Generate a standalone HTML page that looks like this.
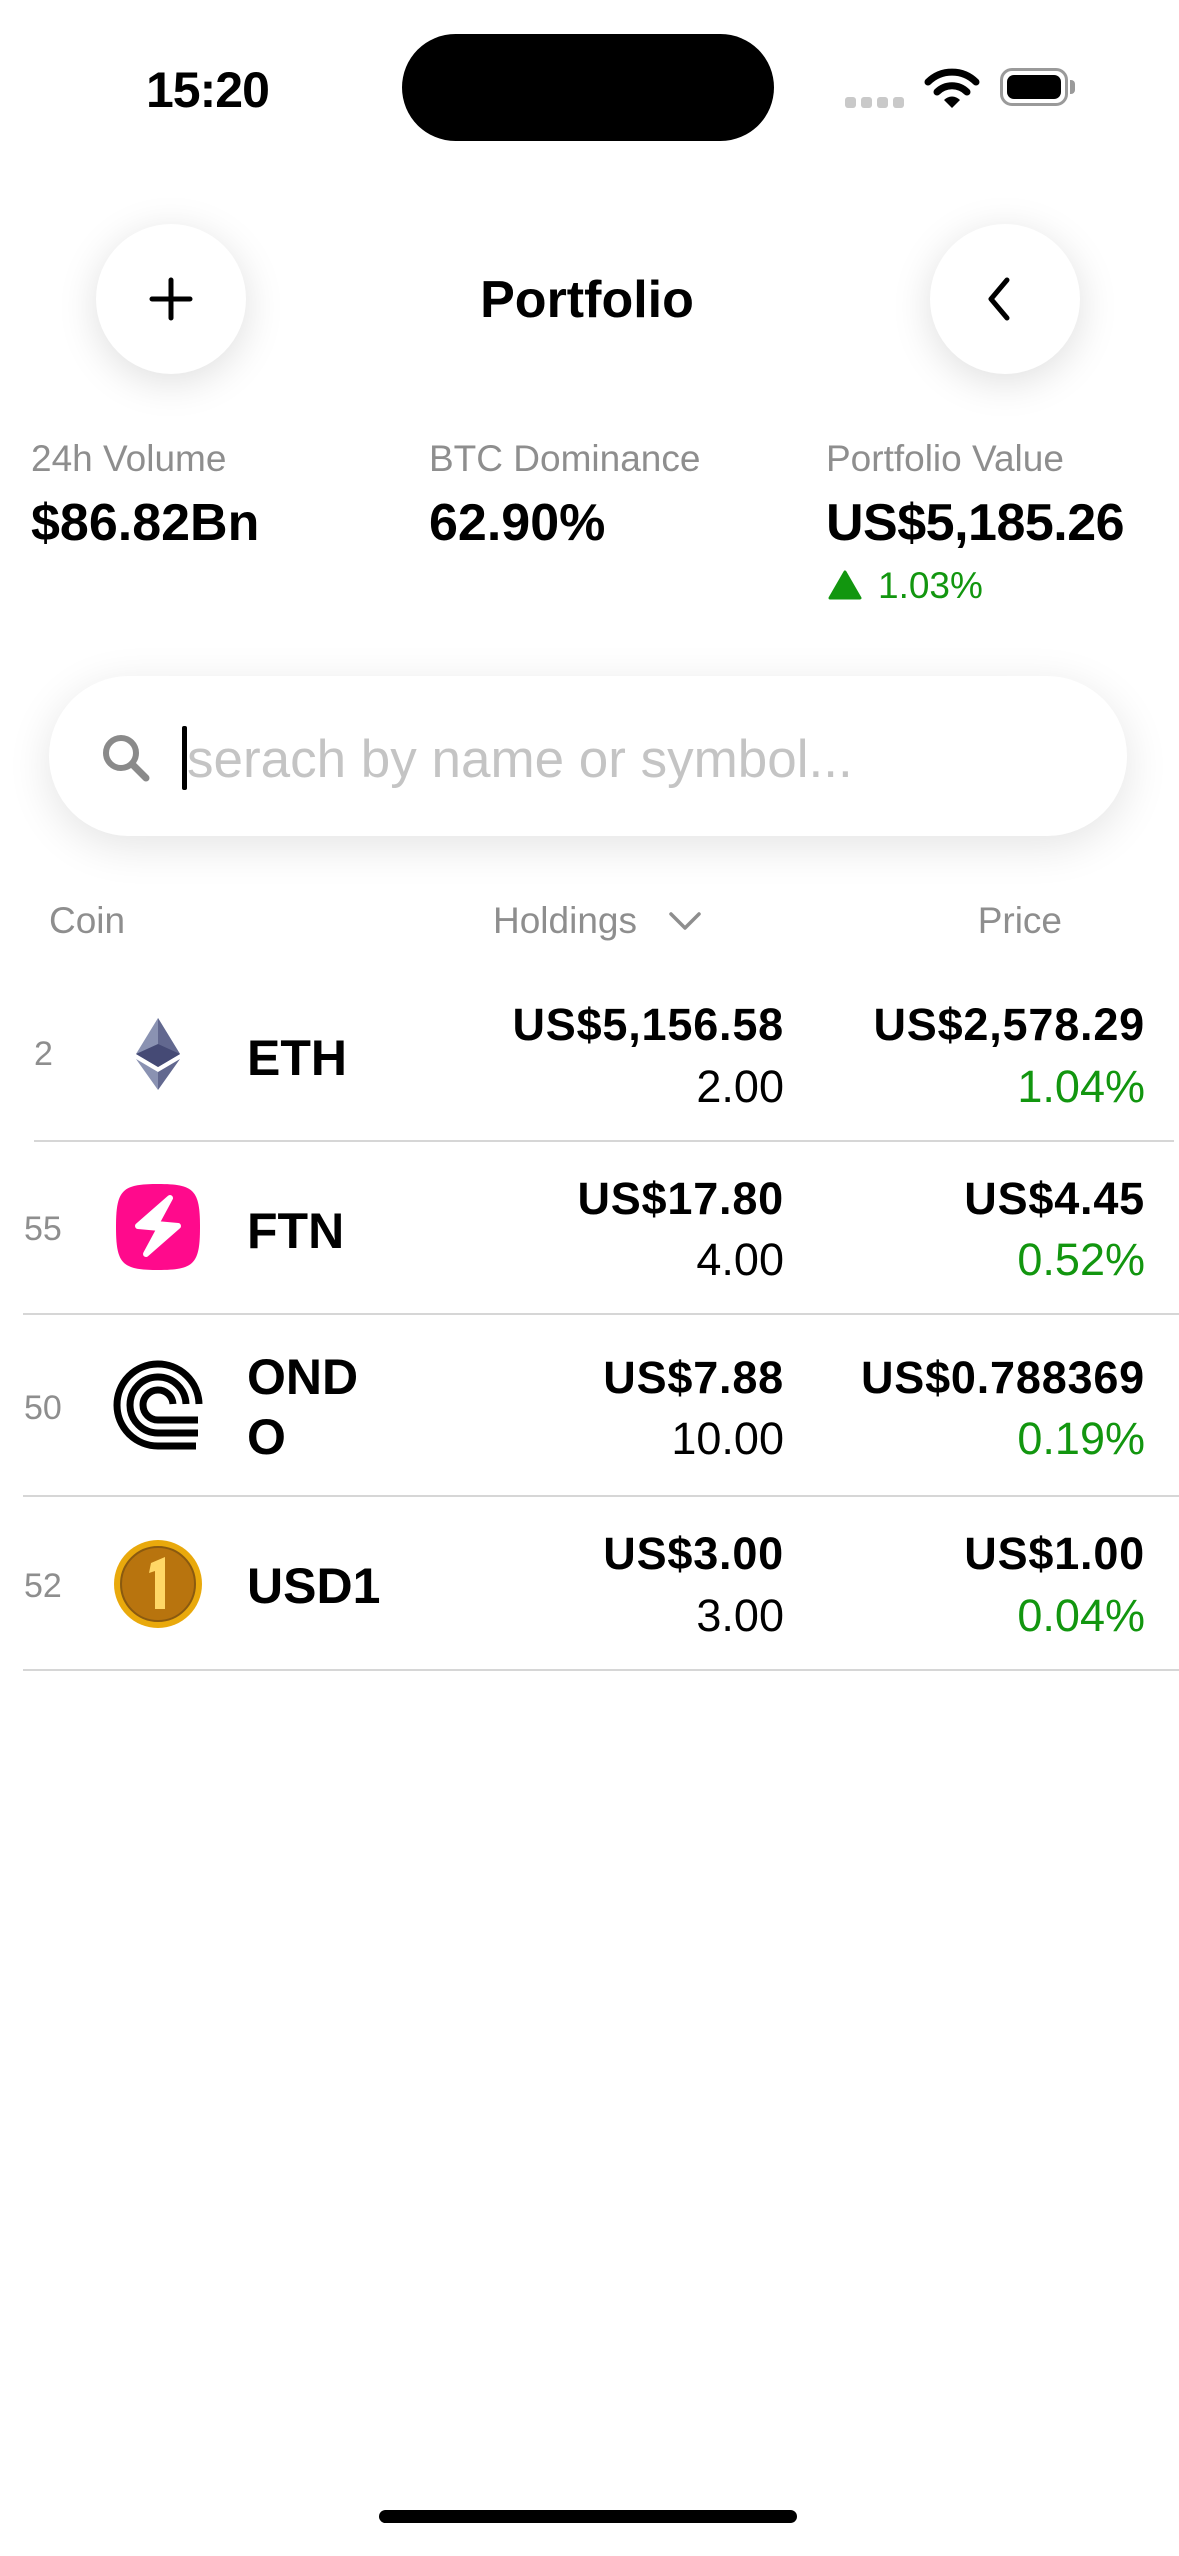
<!DOCTYPE html>
<html><head><meta charset="utf-8">
<style>
*{margin:0;padding:0;box-sizing:border-box}
body{width:1179px;height:2556px;background:#fff;position:relative;overflow:hidden;font-family:"Liberation Sans",sans-serif;color:#000}
.a{position:absolute;line-height:1;white-space:nowrap}
.r{text-align:right}
.b{font-weight:bold}
.g{color:#8e8e8e}
.gr{color:#12960f}
.div{position:absolute;height:2px;background:#d6d6d6}
</style></head><body>

<!-- status bar -->
<div class="a b" style="left:146px;top:65px;font-size:50px;letter-spacing:-1px">15:20</div>
<div style="position:absolute;left:402px;top:34px;width:372px;height:107px;border-radius:54px;background:#000"></div>
<div style="position:absolute;left:845px;top:97px;width:11px;height:11px;border-radius:3px;background:#c9c9c9"></div>
<div style="position:absolute;left:861px;top:97px;width:11px;height:11px;border-radius:3px;background:#c9c9c9"></div>
<div style="position:absolute;left:877px;top:97px;width:11px;height:11px;border-radius:3px;background:#c9c9c9"></div>
<div style="position:absolute;left:893px;top:97px;width:11px;height:11px;border-radius:3px;background:#c9c9c9"></div>
<svg style="position:absolute;left:924px;top:66px" width="56" height="44" viewBox="0 0 56 44">
<path d="M4 16 A34 34 0 0 1 52 16" fill="none" stroke="#000" stroke-width="7" stroke-linecap="round"/>
<path d="M13 26 A21 21 0 0 1 43 26" fill="none" stroke="#000" stroke-width="7" stroke-linecap="round"/>
<path d="M20 34 L28 42 L36 34 A11 11 0 0 0 20 34Z" fill="#000"/>
</svg>
<div style="position:absolute;left:1000px;top:68px;width:68px;height:38px;border:3px solid #9a9a9a;border-radius:12px;padding:4px"><div style="width:100%;height:100%;background:#000;border-radius:7px"></div></div>
<div style="position:absolute;left:1070px;top:80px;width:5px;height:14px;background:#9a9a9a;border-radius:0 4px 4px 0"></div>

<!-- nav -->
<div style="position:absolute;left:96px;top:224px;width:150px;height:150px;border-radius:50%;background:#fff;box-shadow:0 8px 40px rgba(0,0,0,0.13)"></div>
<svg style="position:absolute;left:148px;top:276px" width="46" height="46" viewBox="0 0 46 46"><path d="M23 4V42M4 23H42" stroke="#000" stroke-width="5" stroke-linecap="round"/></svg>
<div style="position:absolute;left:930px;top:224px;width:150px;height:150px;border-radius:50%;background:#fff;box-shadow:0 8px 40px rgba(0,0,0,0.13)"></div>
<svg style="position:absolute;left:985px;top:276px" width="30" height="46" viewBox="0 0 30 46"><path d="M22 4L6 23L22 42" fill="none" stroke="#000" stroke-width="5" stroke-linecap="round" stroke-linejoin="round"/></svg>
<div class="a b" style="left:387px;width:400px;text-align:center;top:274px;font-size:52px">Portfolio</div>

<!-- stats -->
<div class="a g" style="left:31px;top:440px;font-size:37px">24h Volume</div>
<div class="a g" style="left:429px;top:440px;font-size:37px">BTC Dominance</div>
<div class="a g" style="left:826px;top:440px;font-size:37px">Portfolio Value</div>
<div class="a b" style="left:31px;top:497px;font-size:52px">$86.82Bn</div>
<div class="a b" style="left:429px;top:497px;font-size:52px">62.90%</div>
<div class="a b" style="left:826px;top:497px;font-size:52px;letter-spacing:-0.5px">US$5,185.26</div>
<svg style="position:absolute;left:828px;top:570px" width="34" height="30" viewBox="0 0 34 30"><path d="M17 2 L32 28 L2 28Z" fill="#12960f" stroke="#12960f" stroke-width="3" stroke-linejoin="round"/></svg>
<div class="a gr" style="left:878px;top:567px;font-size:37px">1.03%</div>

<!-- search -->
<div style="position:absolute;left:49px;top:676px;width:1078px;height:160px;border-radius:80px;background:#fff;box-shadow:0 10px 44px rgba(0,0,0,0.11)"></div>
<svg style="position:absolute;left:100px;top:732px" width="54" height="54" viewBox="0 0 54 54"><circle cx="21" cy="21" r="15" fill="none" stroke="#8a8a8a" stroke-width="6"/><path d="M32 32L46 46" stroke="#8a8a8a" stroke-width="7" stroke-linecap="round"/></svg>
<div style="position:absolute;left:182px;top:726px;width:5px;height:64px;background:#000;border-radius:2px"></div>
<div class="a" style="left:187px;top:733px;font-size:53px;color:#c4c4c4">serach by name or symbol...</div>

<!-- header -->
<div class="a g" style="left:49px;top:902px;font-size:37px">Coin</div>
<div class="a g" style="left:493px;top:902px;font-size:37px">Holdings</div>
<svg style="position:absolute;left:668px;top:910px" width="34" height="22" viewBox="0 0 34 22"><path d="M3 4L17 18L31 4" fill="none" stroke="#8e8e8e" stroke-width="3.5" stroke-linecap="round" stroke-linejoin="round"/></svg>
<div class="a g r" style="right:117px;top:902px;font-size:37px">Price</div>

<!-- ETH -->
<div class="a g" style="left:34px;top:1037px;font-size:34px">2</div>
<svg style="position:absolute;left:134px;top:1018px" width="48" height="72" viewBox="0 0 48 72">
<path d="M24 0L2 36L24 49L46 36Z" fill="#8a92b2"/><path d="M24 0L46 36L24 49Z" fill="#62688f"/><path d="M24 26L2 36L24 49L46 36Z" fill="#454a75"/>
<path d="M2 41L24 72L24 54Z" fill="#8a92b2"/><path d="M46 41L24 72L24 54Z" fill="#62688f"/></svg>
<div class="a b" style="left:247px;top:1033px;font-size:50px">ETH</div>
<div class="a b r" style="right:395px;top:1002px;font-size:45px;letter-spacing:0.8px">US$5,156.58</div>
<div class="a r" style="right:395px;top:1064px;font-size:45px">2.00</div>
<div class="a b r" style="right:34px;top:1002px;font-size:45px;letter-spacing:0.8px">US$2,578.29</div>
<div class="a r gr" style="right:34px;top:1064px;font-size:45px">1.04%</div>
<div class="div" style="left:34px;right:5px;top:1140px"></div>

<!-- FTN -->
<div class="a g" style="left:24px;top:1212px;font-size:34px">55</div>
<svg style="position:absolute;left:114px;top:1182px" width="88" height="90" viewBox="0 0 88 90">
<path d="M44 2C80 2 86 8 86 45C86 82 80 88 44 88C8 88 2 82 2 45C2 8 8 2 44 2Z" fill="#ff0a8c"/>
<path d="M56 16L24 44L46 46L32 72L64 44L42 42Z" fill="#fff" stroke="#fff" stroke-width="6" stroke-linejoin="round"/></svg>
<div class="a b" style="left:247px;top:1206px;font-size:50px">FTN</div>
<div class="a b r" style="right:395px;top:1176px;font-size:45px;letter-spacing:0.8px">US$17.80</div>
<div class="a r" style="right:395px;top:1237px;font-size:45px">4.00</div>
<div class="a b r" style="right:34px;top:1176px;font-size:45px;letter-spacing:0.8px">US$4.45</div>
<div class="a r gr" style="right:34px;top:1237px;font-size:45px">0.52%</div>
<div class="div" style="left:23px;right:0;top:1313px"></div>

<!-- ONDO -->
<div class="a g" style="left:24px;top:1391px;font-size:34px">50</div>
<svg style="position:absolute;left:112px;top:1360px" width="92" height="92" viewBox="-46 -46 92 92">
<g fill="none" stroke="#000" stroke-width="7">
<path d="M41 -2A41 41 0 1 0 0 40H38"/>
<path d="M28 -2A28 28 0 1 0 0 27H40"/>
<path d="M15 -2A15 15 0 1 0 0 14H40"/>
</g></svg>
<div class="a b" style="left:247px;top:1352px;font-size:50px">OND</div>
<div class="a b" style="left:247px;top:1412px;font-size:50px">O</div>
<div class="a b r" style="right:395px;top:1355px;font-size:45px;letter-spacing:0.8px">US$7.88</div>
<div class="a r" style="right:395px;top:1416px;font-size:45px">10.00</div>
<div class="a b r" style="right:34px;top:1355px;font-size:45px;letter-spacing:0.8px">US$0.788369</div>
<div class="a r gr" style="right:34px;top:1416px;font-size:45px">0.19%</div>
<div class="div" style="left:23px;right:0;top:1495px"></div>

<!-- USD1 -->
<div class="a g" style="left:24px;top:1569px;font-size:34px">52</div>
<svg style="position:absolute;left:113px;top:1539px" width="90" height="90" viewBox="0 0 90 90">
<circle cx="45" cy="45" r="44" fill="#e9a90c"/><circle cx="45" cy="45" r="37" fill="#b8740e"/>
<circle cx="45" cy="45" r="37" fill="none" stroke="#8a5a10" stroke-width="2"/>
<path d="M38 24L52 18V70H42V32L36 34Z" fill="#ffd766"/></svg>
<div class="a b" style="left:247px;top:1561px;font-size:50px">USD1</div>
<div class="a b r" style="right:395px;top:1531px;font-size:45px;letter-spacing:0.8px">US$3.00</div>
<div class="a r" style="right:395px;top:1593px;font-size:45px">3.00</div>
<div class="a b r" style="right:34px;top:1531px;font-size:45px;letter-spacing:0.8px">US$1.00</div>
<div class="a r gr" style="right:34px;top:1593px;font-size:45px">0.04%</div>
<div class="div" style="left:23px;right:0;top:1669px"></div>

<!-- home indicator -->
<div style="position:absolute;left:379px;top:2510px;width:418px;height:13px;border-radius:7px;background:#000"></div>
</body></html>
